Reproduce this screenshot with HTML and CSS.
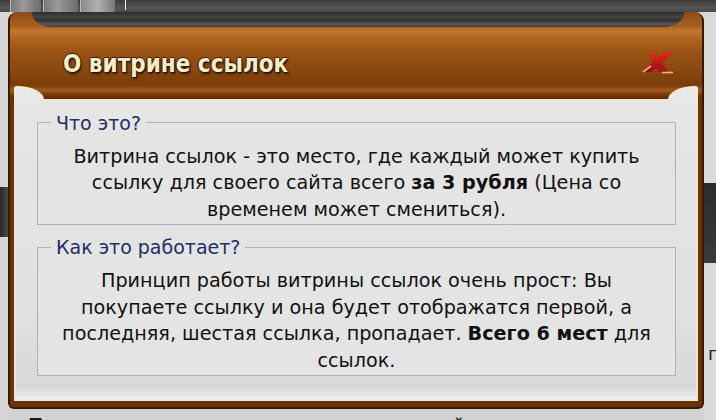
FILE: index.html
```html
<!DOCTYPE html>
<html lang="ru">
<head>
<meta charset="utf-8">
<title>О витрине ссылок</title>
<link rel="stylesheet" href="styles.css">
</head>
<body>
<div class="screen">
  <div class="bg-top">
    <span class="thumb t1"></span><span class="thumb t2"></span><span class="thumb t3"></span><span class="tick"></span>
  </div>
  <div class="bg-left"><span class="band"></span></div>
  <div class="dialog">
    <div class="header">
      <h1 class="title">О витрине ссылок</h1>
      <svg class="close" width="34" height="23" viewBox="0 0 34 23" aria-label="Закрыть">
        <defs>
          <linearGradient id="red" x1="0" y1="0" x2="0" y2="1">
            <stop offset="0" stop-color="#e02a1c"/>
            <stop offset="1" stop-color="#a00a0a"/>
          </linearGradient>
          <filter id="soft" x="-20%" y="-20%" width="140%" height="140%">
            <feGaussianBlur stdDeviation="0.6"/>
          </filter>
        </defs>
        <g filter="url(#soft)">
          <polygon points="6,2 15,2 27,21 18,21" fill="url(#red)" opacity="0.85"/>
          <polygon points="23,1 33,1 11,21 1,21" fill="url(#red)"/>
          <path d="M2 21 L10 15" stroke="#f3d6b0" stroke-width="1.6" opacity="0.8"/>
          <path d="M21 21.5 H32" stroke="#f3d6b0" stroke-width="1.6" opacity="0.8"/>
        </g>
      </svg>
    </div>
    <div class="panel">
      <fieldset class="group">
        <legend>Что это?</legend>
        <p class="text">Витрина ссылок - это место, где каждый может купить<br>ссылку для своего сайта всего <b>за 3 рубля</b> (Цена со<br>временем может смениться).</p>
      </fieldset>
      <fieldset class="group">
        <legend>Как это работает?</legend>
        <p class="text">Принцип работы витрины ссылок очень прост: Вы<br>покупаете ссылку и она будет отображатся первой, а<br>последняя, шестая ссылка, пропадает. <b>Всего 6 мест</b> для<br>ссылок.</p>
      </fieldset>
    </div>
  </div>
  <div class="bg-right"><span class="rband"></span><span class="rletter">п</span></div>
  <div class="bg-bottom">Популярные категории в каталоге сайтов и игр</div>
</div>
</body>
</html>
```

FILE: styles.css
```css
html, body {
  margin: 0;
  padding: 0;
}
body {
  width: 716px;
  height: 420px;
  overflow: hidden;
  background: #d4d4d4;
}
.screen {
  width: 716px;
  height: 420px;
  display: grid;
  grid-template-columns: 8px 696px 12px;
  grid-template-rows: 12px 397px 11px;
  overflow: hidden;
}
.bg-top {
  grid-column: 1 / 4;
  grid-row: 1;
  background: linear-gradient(#3c3c3c, #555 60%, #4a4a4a);
  display: flex;
  align-items: flex-start;
  gap: 2px;
  padding-left: 10px;
}
.thumb {
  display: block;
  height: 12px;
  background: linear-gradient(90deg, #777, #9a9a9a 40%, #6c6c6c);
  border-left: 1px solid #bbb;
}
.t1 { width: 30px; }
.t2 { width: 34px; }
.t3 { width: 34px; background: linear-gradient(90deg, #8a8a8a, #b0b0b0 50%, #777); }
.tick {
  display: block;
  width: 1px;
  height: 10px;
  margin-left: 8px;
  background: #eee;
}
.bg-left {
  grid-column: 1;
  grid-row: 2 / 4;
  background: #d6d6d6;
  display: flex;
  flex-direction: column;
  padding-top: 175px;
}
.band {
  display: block;
  height: 50px;
  background: linear-gradient(90deg, #2a2a2a, #4a4a4a);
}
.bg-right {
  grid-column: 3;
  grid-row: 2 / 4;
  background: #dadada;
  display: flex;
  flex-direction: column;
  padding-top: 171px;
}
.rband {
  display: block;
  height: 80px;
  background: linear-gradient(#2b2b2b, #3a3a3a);
}
.rletter {
  display: block;
  margin-top: 80px;
  padding-left: 4px;
  font: 18px "DejaVu Sans", sans-serif;
  color: #222;
}
.bg-bottom {
  grid-column: 2;
  grid-row: 3;
  background: #d2d2d2;
  overflow: hidden;
  padding: 6px 0 0 20px;
  font: bold 18px/20px "DejaVu Sans", sans-serif;
  color: #1a1a1a;
  white-space: nowrap;
  letter-spacing: 1px;
}

/* dialog */
.dialog {
  grid-column: 2;
  grid-row: 2;
  position: relative;
  display: flex;
  flex-direction: column;
  background: #6a3209;
  border: 2px solid #3a1700;
  border-top: 0;
  border-radius: 9px 9px 6px 6px;
  padding: 0 4px 6px;
  box-sizing: border-box;
}
.dialog::before {
  content: "";
  position: absolute;
  top: 0;
  left: 22px;
  right: 18px;
  height: 15px;
  background: linear-gradient(#2c2c2c, #474747 35%, #2f2f2f 55%, #5a5a5a 80%, #3a3a3a);
  border-radius: 0 0 20px 20px / 0 0 14px 14px;
}
.header {
  height: 87px;
  margin: 0 -4px;
  padding: 17px 27px 0 53px;
  box-sizing: border-box;
  display: flex;
  align-items: center;
  justify-content: space-between;
  border-radius: 8px 8px 0 0;
  background: linear-gradient(#8c4a14 0, #a8601e 16%, #c3772e 22%, #b0661f 30%, #9a5314 45%, #8c4910 65%, #7a3c09 84%, #a25a1e 90%, #7b3a08 95%, #5e2a04 100%);
}
.title {
  margin: 0;
  font-family: "DejaVu Sans Condensed", "DejaVu Sans", sans-serif;
  font-stretch: condensed;
  font-weight: bold;
  font-size: 24px;
  line-height: 28px;
  color: #f3edc8;
  letter-spacing: 0;
  text-shadow: 1px 1px 0 #2a1000, -1px 0 0 #3b1800, 0 -1px 0 #3b1800, 1px 2px 3px rgba(0,0,0,0.6);
}
.close {
  display: block;
  margin-top: -3px;
}

/* content panel */
.panel {
  position: relative;
  flex: 1;
  background: linear-gradient(#e6e6e6, #e1e1e1 70%, #d8d8d8 96%, #eeeeee);
  border: 2px solid #f2e6d2;
  padding: 12px 20px 23px 21px;
  display: flex;
  flex-direction: column;
  gap: 12px;
  box-sizing: border-box;
}
.panel::before,
.panel::after {
  content: "";
  position: absolute;
  top: -15px;
  width: 30px;
  height: 15px;
  box-sizing: border-box;
  background: #e8e8e8;
  border-top: 2px solid #f4e9d6;
}
.panel::before {
  left: -2px;
  border-left: 2px solid #f4e9d6;
  border-radius: 3px 100% 0 0 / 3px 100% 0 0;
}
.panel::after {
  right: -2px;
  border-right: 2px solid #f4e9d6;
  border-radius: 100% 3px 0 0 / 100% 3px 0 0;
}
.group {
  margin: 0;
  padding: 11px 8px 1px;
  border: 1px solid #a7b1cb;
  background: #e4e4e4;
}
.group legend {
  margin-left: 5px;
  padding: 0 5px;
  font: 19px/20px "DejaVu Sans", sans-serif;
  color: #1e2e64;
}
.text {
  margin: 0;
  text-align: center;
  font: 19.2px/26.5px "DejaVu Sans", sans-serif;
  color: #111;
  white-space: nowrap;
}
.text b {
  font-weight: bold;
}
```
